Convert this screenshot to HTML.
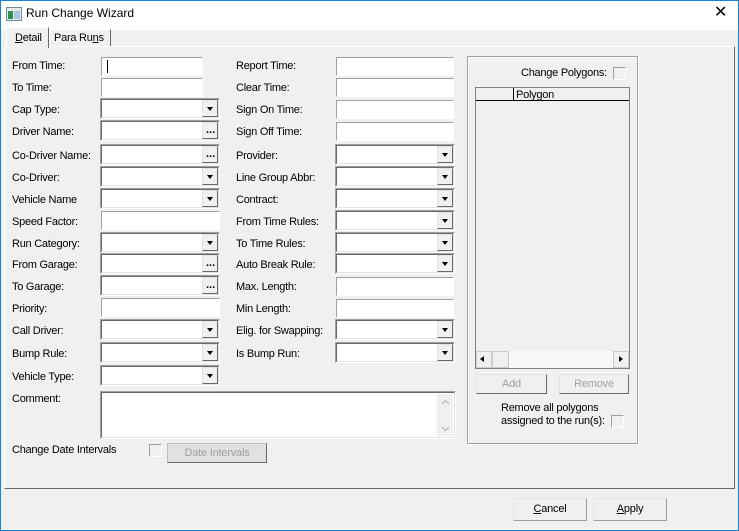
<!DOCTYPE html>
<html><head><meta charset="utf-8"><style>
*{box-sizing:border-box;margin:0;padding:0}
body{width:739px;height:531px;background:#f0f0f0;font-family:"Liberation Sans",sans-serif;font-size:11px;color:#000;position:relative;overflow:hidden}
.win{position:absolute;left:0;top:0;width:739px;height:531px;border:1px solid #1883d7}
.title{position:absolute;left:1px;top:1px;width:737px;height:29px;background:#fff}
.a{position:absolute}
.l{position:absolute;white-space:nowrap;line-height:13px;margin-top:1px;letter-spacing:-0.25px}
.t{position:absolute;background:#fff;border-top:1px solid #a0a0a0;border-left:1px solid #a0a0a0;border-right:1px solid #fff;border-bottom:1px solid #fff;height:19px}
.c{position:absolute;background:#fff;border-top:1px solid #a0a0a0;border-left:1px solid #a0a0a0;border-right:1px solid #fff;border-bottom:1px solid #fff;height:21px}
.c::before{content:"";position:absolute;left:0;top:0;right:0;bottom:0;border-top:1px solid #696969;border-left:1px solid #696969;border-right:1px solid #e3e3e3;border-bottom:1px solid #e3e3e3}
.c .b{position:absolute;right:1px;top:1px;width:16px;height:17px;background:#f0f0f0;border-top:1px solid #e3e3e3;border-left:1px solid #e3e3e3;border-right:1px solid #696969;border-bottom:1px solid #696969}
.c .b::after{content:"";position:absolute;left:4px;top:6px;border-left:3.5px solid transparent;border-right:3.5px solid transparent;border-top:4px solid #000}
.e .b::after{content:"...";position:absolute;left:3px;top:2px;border:none;font-size:11px;font-weight:bold;line-height:10px}
.btn{position:absolute;background:#e1e1e1;border:1px solid #adadad;text-align:center;line-height:18px;color:#a0a0a0;letter-spacing:-0.2px}
.chk{position:absolute;width:13px;height:13px;background:#f0f0f0;border:1px solid #a0a0a0;border-right-color:#fff;border-bottom-color:#fff}
</style></head><body>
<div class="win"></div>
<div class="title"></div>
<svg class="a" style="left:6px;top:7px" width="16" height="14"><rect x="0.5" y="0.5" width="15" height="13" fill="#e8e8e8" stroke="#6a8aa0"/><rect x="2" y="4" width="5" height="8" fill="#2f8f4f"/><rect x="8" y="4" width="6" height="8" fill="#a8c8e0"/></svg>
<div class="l" style="left:26px;top:5px;font-size:12px;line-height:15px;letter-spacing:0">Run Change Wizard</div>
<div class="l" style="left:714px;top:3px;font-size:16px;line-height:18px;letter-spacing:0">✕</div>

<!-- tabs -->
<div class="a" style="left:4px;top:46px;width:731px;height:443px;border-top:1px solid #fff;border-left:1px solid #fff;border-right:1px solid #696969;border-bottom:1px solid #696969"></div>
<div class="a" style="left:6px;top:27px;width:43px;height:21px;background:#f0f0f0;border-top:1px solid #fff;border-left:1px solid #fff;border-right:1px solid #696969"></div>
<div class="l" style="left:15px;top:31px"><u>D</u>etail</div>
<div class="a" style="left:49px;top:29px;width:62px;height:17px;border-top:1px solid #fff;border-left:1px solid #fff;border-right:1px solid #696969"></div>
<div class="l" style="left:54px;top:31px">Para Ru<u>n</u>s</div>

<!-- left labels -->
<div class="l" style="left:12px;top:59px">From Time:</div>
<div class="l" style="left:12px;top:81px">To Time:</div>
<div class="l" style="left:12px;top:103px">Cap Type:</div>
<div class="l" style="left:12px;top:125px">Driver Name:</div>
<div class="l" style="left:12px;top:149px">Co-Driver Name:</div>
<div class="l" style="left:12px;top:171px">Co-Driver:</div>
<div class="l" style="left:12px;top:193px">Vehicle Name</div>
<div class="l" style="left:12px;top:215px">Speed Factor:</div>
<div class="l" style="left:12px;top:237px">Run Category:</div>
<div class="l" style="left:12px;top:258px">From Garage:</div>
<div class="l" style="left:12px;top:280px">To Garage:</div>
<div class="l" style="left:12px;top:302px">Priority:</div>
<div class="l" style="left:12px;top:324px">Call Driver:</div>
<div class="l" style="left:12px;top:347px">Bump Rule:</div>
<div class="l" style="left:12px;top:370px">Vehicle Type:</div>
<div class="l" style="left:12px;top:392px">Comment:</div>

<!-- left fields -->
<div class="t" style="left:101px;top:57px;width:102px"><div class="a" style="left:5px;top:2px;width:1px;height:13px;background:#000"></div></div>
<div class="t" style="left:101px;top:78px;width:102px"></div>
<div class="c" style="left:100px;top:98px;width:120px"><div class="b"></div></div>
<div class="c e" style="left:100px;top:120px;width:120px"><div class="b"></div></div>
<div class="c e" style="left:100px;top:144px;width:120px"><div class="b"></div></div>
<div class="c" style="left:100px;top:166px;width:120px"><div class="b"></div></div>
<div class="c" style="left:100px;top:188px;width:120px"><div class="b"></div></div>
<div class="t" style="left:101px;top:211px;width:119px"></div>
<div class="c" style="left:100px;top:232px;width:120px"><div class="b"></div></div>
<div class="c e" style="left:100px;top:253px;width:120px"><div class="b"></div></div>
<div class="c e" style="left:100px;top:275px;width:120px"><div class="b"></div></div>
<div class="t" style="left:101px;top:298px;width:119px"></div>
<div class="c" style="left:100px;top:319px;width:120px"><div class="b"></div></div>
<div class="c" style="left:100px;top:342px;width:120px"><div class="b"></div></div>
<div class="c" style="left:100px;top:365px;width:120px"><div class="b"></div></div>

<!-- right labels -->
<div class="l" style="left:236px;top:59px">Report Time:</div>
<div class="l" style="left:236px;top:81px">Clear Time:</div>
<div class="l" style="left:236px;top:103px">Sign On Time:</div>
<div class="l" style="left:236px;top:125px">Sign Off Time:</div>
<div class="l" style="left:236px;top:149px">Provider:</div>
<div class="l" style="left:236px;top:171px">Line Group Abbr:</div>
<div class="l" style="left:236px;top:193px">Contract:</div>
<div class="l" style="left:236px;top:215px">From Time Rules:</div>
<div class="l" style="left:236px;top:237px">To Time Rules:</div>
<div class="l" style="left:236px;top:258px">Auto Break Rule:</div>
<div class="l" style="left:236px;top:280px">Max. Length:</div>
<div class="l" style="left:236px;top:302px">Min Length:</div>
<div class="l" style="left:236px;top:324px">Elig. for Swapping:</div>
<div class="l" style="left:236px;top:347px">Is Bump Run:</div>

<div class="t" style="left:336px;top:57px;width:118px"></div>
<div class="t" style="left:336px;top:78px;width:118px"></div>
<div class="t" style="left:336px;top:100px;width:118px"></div>
<div class="t" style="left:336px;top:122px;width:118px"></div>
<div class="c" style="left:335px;top:144px;width:120px"><div class="b"></div></div>
<div class="c" style="left:335px;top:166px;width:120px"><div class="b"></div></div>
<div class="c" style="left:335px;top:188px;width:120px"><div class="b"></div></div>
<div class="c" style="left:335px;top:210px;width:120px"><div class="b"></div></div>
<div class="c" style="left:335px;top:232px;width:120px"><div class="b"></div></div>
<div class="c" style="left:335px;top:253px;width:120px"><div class="b"></div></div>
<div class="t" style="left:336px;top:277px;width:118px"></div>
<div class="t" style="left:336px;top:299px;width:118px"></div>
<div class="c" style="left:335px;top:319px;width:120px"><div class="b"></div></div>
<div class="c" style="left:335px;top:342px;width:120px"><div class="b"></div></div>

<!-- comment -->
<div class="c" style="left:100px;top:391px;width:356px;height:48px"><div class="a" style="right:2px;top:2px;width:16px;height:42px;background:#f0f0f0"></div>
<svg class="a" style="right:5px;top:7px" width="9" height="34"><path d="M1 5 L4.5 1.5 L8 5" fill="none" stroke="#bbb" stroke-width="1.3"/><path d="M1 28 L4.5 31.5 L8 28" fill="none" stroke="#bbb" stroke-width="1.3"/></svg></div>

<div class="l" style="left:12px;top:443px">Change Date Intervals</div>
<div class="chk" style="left:149px;top:444px"></div>
<div class="btn" style="left:167px;top:443px;width:100px;height:20px;border-color:#bfbfbf;border-right-color:#696969;border-bottom-color:#696969">Date Intervals</div>

<!-- group -->
<div class="a" style="left:467px;top:56px;width:171px;height:388px;border:1px solid #a0a0a0;box-shadow:inset 1px 1px 0 #fff,1px 1px 0 #fff"></div>
<div class="l" style="left:521px;top:66px">Change Polygons:</div>
<div class="chk" style="left:613px;top:67px"></div>
<div class="a" style="left:475px;top:87px;width:155px;height:282px;border:1px solid #828282;background:#f0f0f0"></div>
<div class="a" style="left:476px;top:100px;width:153px;height:1px;background:#000"></div>
<div class="a" style="left:513px;top:88px;width:1px;height:12px;background:#000"></div>
<div class="l" style="left:516px;top:88px">Polygon</div>
<div class="a" style="left:476px;top:351px;width:153px;height:17px;background:#f8f8f8"></div>
<div class="a" style="left:476px;top:351px;width:16px;height:17px;background:#f0f0f0;border:1px solid #ccc"></div>
<div class="a" style="left:480px;top:356px;border-top:3.5px solid transparent;border-bottom:3.5px solid transparent;border-right:4px solid #000"></div>
<div class="a" style="left:492px;top:351px;width:17px;height:17px;background:#f0f0f0;border:1px solid #ccc"></div>
<div class="a" style="left:613px;top:351px;width:16px;height:17px;background:#f0f0f0;border:1px solid #ccc"></div>
<div class="a" style="left:619px;top:356px;border-top:3.5px solid transparent;border-bottom:3.5px solid transparent;border-left:4px solid #000"></div>
<div class="btn" style="left:476px;top:374px;width:71px;height:20px;background:#f0f0f0;border-color:#e3e3e3;border-right-color:#696969;border-bottom-color:#696969">Add</div>
<div class="btn" style="left:559px;top:374px;width:70px;height:20px;background:#f0f0f0;border-color:#e3e3e3;border-right-color:#696969;border-bottom-color:#696969">Remove</div>
<div class="l" style="left:501px;top:401px">Remove all polygons</div>
<div class="l" style="left:501px;top:414px">assigned to the run(s):</div>
<div class="chk" style="left:611px;top:415px"></div>

<!-- bottom buttons -->
<div class="btn" style="left:513px;top:498px;width:74px;height:23px;line-height:21px;color:#000;background:#f0f0f0;border-color:#e3e3e3;border-right-color:#a0a0a0;border-bottom-color:#a0a0a0"><u>C</u>ancel</div>
<div class="btn" style="left:593px;top:498px;width:74px;height:23px;line-height:21px;color:#000;background:#f0f0f0;border-color:#e3e3e3;border-right-color:#a0a0a0;border-bottom-color:#a0a0a0"><u>A</u>pply</div>
</body></html>
